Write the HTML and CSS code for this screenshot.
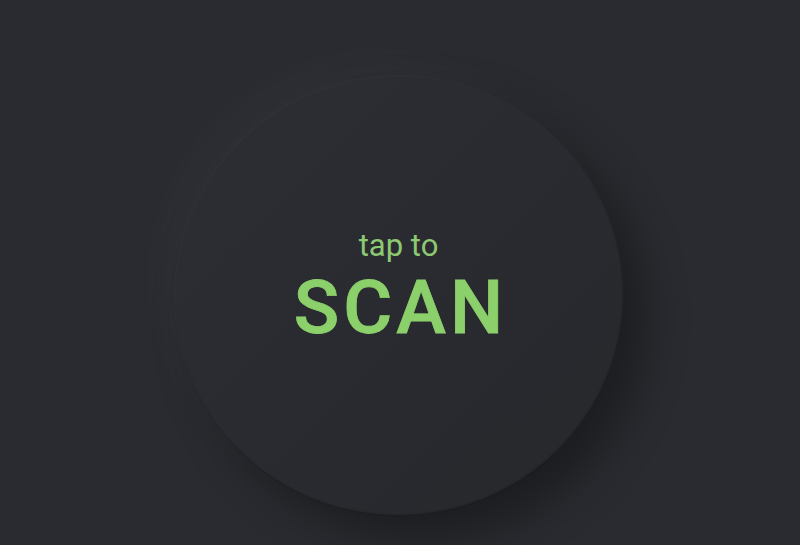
FILE: index.html
```html
<!DOCTYPE html>
<html>
<head>
<meta charset="utf-8">
<link rel="stylesheet" href="styles.css">
</head>
<body>
<main class="stage">
  <button class="scan-button">
    <span class="scan-small">tap to</span>
    <span class="scan-big">SCAN</span>
  </button>
</main>
</body>
</html>
```
FILE: styles.css
```css
html, body {
  margin: 0;
  height: 100%;
  background: #2a2b30;
}
.stage {
  box-sizing: border-box;
  height: 545px;
  display: flex;
  align-items: center;
  justify-content: center;
  padding-top: 47px;
  padding-right: 3px;
  overflow: hidden;
}
.scan-button {
  width: 450px;
  height: 442px;
  border-radius: 50%;
  border: none;
  background: linear-gradient(135deg, #2d2e33 0%, #2a2b30 50%, #27282c 100%);
  box-shadow:
    -18px -18px 40px rgba(255, 255, 255, 0.025),
    22px 22px 44px rgba(0, 0, 0, 0.32),
    inset -1px -2px 2px rgba(0, 0, 0, 0.35),
    inset 1px 1px 2px rgba(255, 255, 255, 0.03);
  display: flex;
  flex-direction: column;
  align-items: center;
  justify-content: center;
  padding: 0 0 20px 0;
  font-family: Roboto, "Liberation Sans", sans-serif;
  color: #8bd06b;
}
.scan-small {
  font-size: 31px;
  line-height: 36px;
  font-weight: 400;
  color: #8dc972;
}
.scan-big {
  font-size: 75px;
  line-height: 74px;
  font-weight: 500;
  letter-spacing: 4px;
  margin-top: 6px;
  margin-right: -4px;
  color: #8bd06b;
  -webkit-text-stroke: 0.8px #8bd06b;
}
```
